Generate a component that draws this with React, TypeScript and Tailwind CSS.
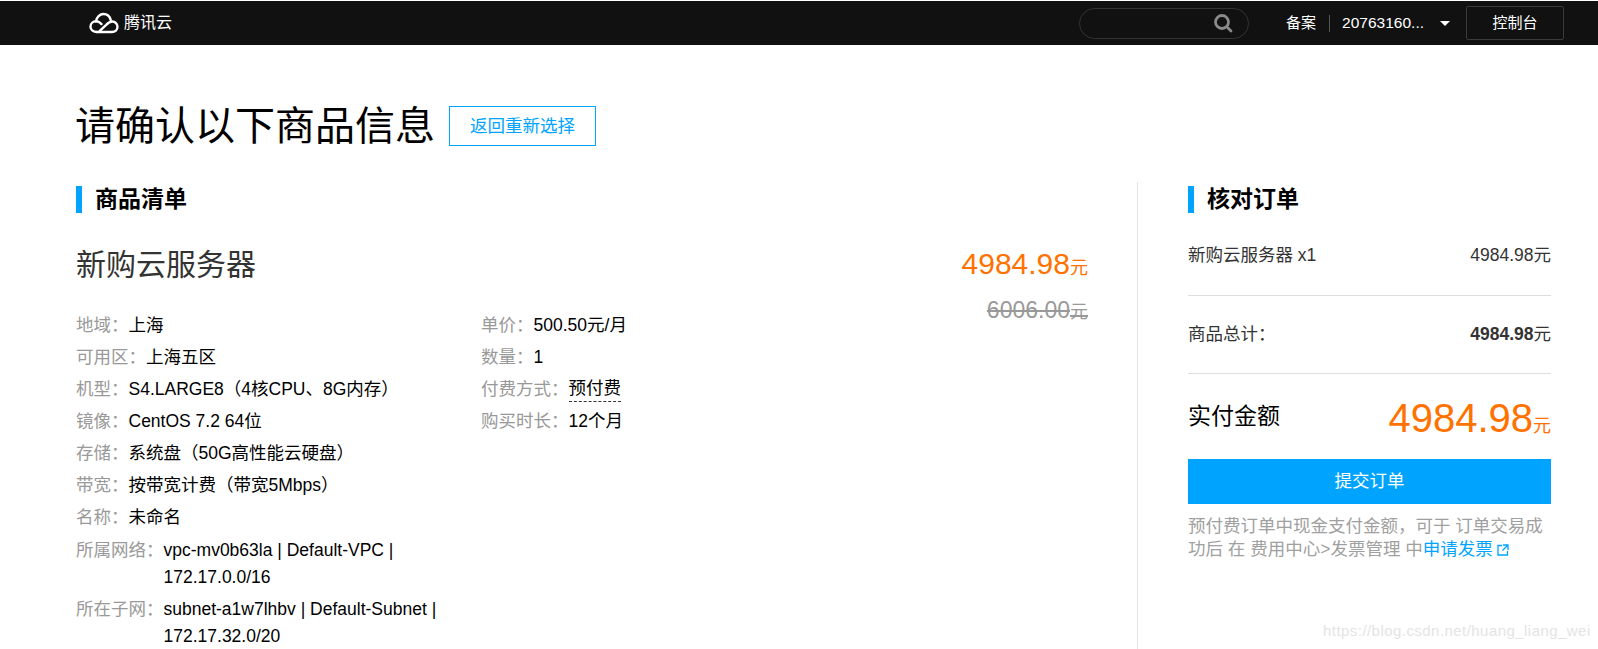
const font = 'font-["Liberation_Sans","Noto_Sans_CJK_SC",sans-serif]'

const leftRows = [
  { label: '地域', value: '上海' },
  { label: '可用区', value: '上海五区' },
  { label: '机型', value: 'S4.LARGE8（4核CPU、8G内存）' },
  { label: '镜像', value: 'CentOS 7.2 64位' },
  { label: '存储', value: '系统盘（50G高性能云硬盘）' },
  { label: '带宽', value: '按带宽计费（带宽5Mbps）' },
  { label: '名称', value: '未命名' },
]

const rightRows = [
  { label: '单价', value: '500.50元/月' },
  { label: '数量', value: '1' },
  { label: '付费方式', value: '预付费', dashed: true },
  { label: '购买时长', value: '12个月' },
]

const networkRows = [
  { label: '所属网络', lines: ['vpc-mv0b63la | Default-VPC |', '172.17.0.0/16'] },
  { label: '所在子网', lines: ['subnet-a1w7lhbv | Default-Subnet |', '172.17.32.0/20'] },
]

function Logo() {
  return (
    <svg viewBox="0 0 30 22" className="w-[30px] h-[22px]" fill="none" stroke="#fff" strokeWidth="2.4" strokeLinecap="round">
      <path d="M8 20h15c3 0 5.500-2.200 5.500-5.200 0-3-2.400-5.300-5.300-5.300-2.500 0-4 1.300-6 3.300l-6.700 6.400" />
      <path d="M8 20c-3.500 0-6.500-2-6.500-5.300C1.500 11.600 4 9.300 7 9.300c2.500 0 4 1.200 5.500 2.800" />
      <path d="M7 9.300C7.600 5 10.800 2 14.500 2c3.400 0 6.300 2.500 7.200 6" />
    </svg>
  )
}

function SectionTitle({ children }: { children: string }) {
  return (
    <div className="flex items-center h-[27px]">
      <div className="w-[6px] h-[27px] bg-[#00a4ff]" />
      <h2 className="ml-[13px] text-[23px] font-bold text-black">{children}</h2>
    </div>
  )
}

function Row({ label, value, dashed }: { label: string; value: string; dashed?: boolean }) {
  return (
    <div className="flex h-[32px] items-center text-[17.5px]">
      <span className="text-[#999]">{label}：</span>
      <span className={dashed ? 'text-black border-b border-dashed border-[#333] leading-[25px]' : 'text-black'}>{value}</span>
    </div>
  )
}

export default function App() {
  return (
    <div className={`relative h-[649px] overflow-hidden bg-white ${font}`}>
      <header className="h-[45px] border-t border-white bg-[#111] flex items-center text-white">
        <div className="ml-[89px] flex items-center">
          <Logo />
          <span className="ml-[5px] text-[16px]">腾讯云</span>
        </div>
        <div className="ml-auto flex items-center">
          <div className="w-[170px] h-[31px] rounded-full border border-[#333] flex items-center justify-end pr-[15px]">
            <svg viewBox="0 0 20 20" className="w-[20px] h-[20px]" fill="none" stroke="#8a8a8a" strokeWidth="2.800">
              <circle cx="9" cy="9" r="6.500" />
              <path d="M14 14l4 4" strokeLinecap="round" />
            </svg>
          </div>
          <span className="ml-[37px] text-[15px]">备案</span>
          <span className="ml-[13px] w-px h-[17px] bg-[#555]" />
          <span className="ml-[12px] text-[15.500px]">20763160...</span>
          <span className="ml-[16px] w-0 h-0 border-x-[5px] border-x-transparent border-t-[5px] border-t-white" />
          <div className="ml-[16px] mr-[34px] w-[98px] h-[34px] rounded-[2px] border border-[#3a3a3a] flex items-center justify-center text-[15px]">控制台</div>
        </div>
      </header>

      <div className="pl-[75px] pt-[51px] flex items-center">
        <h1 className="text-[40px] leading-[60px] text-black">请确认以下商品信息</h1>
        <a className="ml-[14px] w-[147px] h-[40px] border border-[#00a4ff] text-[#00a4ff] text-[17.5px] flex items-center justify-center">返回重新选择</a>
      </div>

      <div className="flex mt-[26px]">
        <section className="w-[1062px] ml-[76px] pt-[4px] pr-[49px] border-r border-[#e5e5e5] h-[468px]">
          <SectionTitle>商品清单</SectionTitle>
          <div className="flex justify-between items-start mt-[30px]">
            <div className="text-[30px] leading-[44px] text-[#333]">新购云服务器</div>
            <div className="text-right -mt-[1px]">
              <div className="text-[30px] leading-[44px] text-[#ff7200]">4984.98<span className="text-[18px]">元</span></div>
              <div className="mt-[2px] text-[23px] leading-[36px] text-[#999] line-through">6006.00<span className="text-[18px]">元</span></div>
            </div>
          </div>
          <div className="flex -mt-[21px]">
            <div className="w-[405px]">
              {leftRows.map((r) => (
                <Row key={r.label} {...r} />
              ))}
              {networkRows.map((r) => (
                <div key={r.label} className="flex text-[17.5px] leading-[27px] pt-[4px] pb-[1px]">
                  <span className="text-[#999] shrink-0">{r.label}：</span>
                  <div className="text-black">
                    {r.lines.map((l) => (
                      <div key={l}>{l}</div>
                    ))}
                  </div>
                </div>
              ))}
            </div>
            <div>
              {rightRows.map((r) => (
                <Row key={r.label} {...r} />
              ))}
            </div>
          </div>
        </section>

        <aside className="ml-[50px] w-[363px] pt-[4px]">
          <SectionTitle>核对订单</SectionTitle>
          <div className="flex justify-between items-center mt-[27px] h-[30px] text-[17.5px] text-[#333]">
            <span>新购云服务器 x1</span>
            <span>4984.98元</span>
          </div>
          <div className="h-px bg-[#ddd] mt-[25px]" />
          <div className="flex justify-between items-center mt-[23px] h-[30px] text-[17.5px] text-[#333]">
            <span>商品总计：</span>
            <span><b>4984.98</b>元</span>
          </div>
          <div className="h-px bg-[#ddd] mt-[24px]" />
          <div className="flex justify-between items-end mt-[20px] h-[56px]">
            <span className="text-[23px] text-black pb-[17px]">实付金额</span>
            <span className="text-[40px] leading-[48px] text-[#ff7200]">4984.98<span className="text-[18px]">元</span></span>
          </div>
          <button className="mt-[9px] w-full h-[45px] bg-[#00a4ff] text-white text-[17.5px]">提交订单</button>
          <p className="mt-[11px] text-[17.5px] leading-[23px] text-[#a0a0a0]">
            预付费订单中现金支付金额，可于 订单交易成功后 在 费用中心&gt;发票管理 中
            <a className="text-[#00a4ff]">申请发票</a>
            <svg viewBox="0 0 12 12" className="inline-block ml-[4px] w-[12px] h-[12px] align-[-1px]" fill="none" stroke="#00a4ff" strokeWidth="1.300">
              <path d="M5 1.500H1v9.500h9.500V7" />
              <path d="M6 1h5v5M11 1L5.500 6.500" />
            </svg>
          </p>
        </aside>
      </div>

      <div className="absolute left-[1323px] top-[620px] text-[15px] text-[#e4e4e4] tracking-[0.45px]">https://blog.csdn.net/huang_liang_wei</div>
    </div>
  )
}
